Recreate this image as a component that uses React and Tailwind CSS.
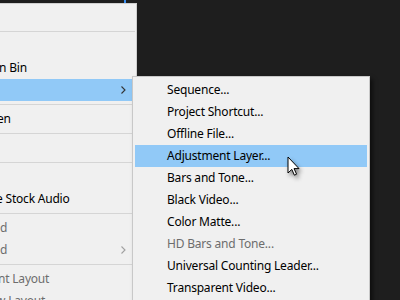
import React from "react";

const leftItems = [
    { text: "" },
    { sep: true },
    { text: "" },
    { text: "n Bin", shift: -1 },
    { text: "", active: true, sub: true },
    { sep: true },
    { text: "en", shift: -3 },
    { sep: true },
    { text: "" },
    { sep: true },
    { text: "" },
    { text: "e Stock Audio", shift: -4 },
    { sep: true },
    { text: "id", shift: -3, disabled: true },
    { text: "id", shift: -3, disabled: true, sub: true },
    { sep: true },
    { text: "nt Layout", shift: -2, disabled: true },
    { text: "w Layout", shift: -4, disabled: true },
];

const subItems = [
    { text: "Sequence..." },
    { text: "Project Shortcut..." },
    { text: "Offline File..." },
    { text: "Adjustment Layer...", active: true },
    { text: "Bars and Tone..." },
    { text: "Black Video..." },
    { text: "Color Matte..." },
    { text: "HD Bars and Tone...", disabled: true },
    { text: "Universal Counting Leader..." },
    { text: "Transparent Video..." },
];

const Chevron = ({ disabled }) => (
    <svg width="5" height="8" viewBox="0 0 5 8" className="shrink-0">
        <path d="M0.5 0.5 L4 4 L0.5 7.5" fill="none" stroke={disabled ? "#a0a0a0" : "#333"} strokeWidth="1.1" />
    </svg>
);

const Cursor = () => (
    <svg width="14" height="21" viewBox="0 0 14 21" className="absolute left-[287px] top-[156px] drop-shadow-[2px_3px_2px_rgba(0,0,0,0.45)]">
        <path d="M1 1 L1 17 L4.8 13.4 L7.4 19.2 L9.6 18.2 L7 12.6 L12 12.6 Z" fill="#fff" stroke="#000" strokeWidth="1" strokeLinejoin="round" />
    </svg>
);

const App = () => {
    return (
        <div className="relative w-[400px] h-[300px] overflow-hidden bg-[#1e1e1e]" style={{ fontFamily: '"Noto Sans", "Open Sans", sans-serif' }}>
            <div className="absolute left-[124px] top-0 w-[2px] h-[3px] bg-[#3b8ff0]" />

            {/* left context menu */}
            <div className="absolute left-0 top-[3px] w-[137px] h-[320px] bg-[#f0f0f0] border-t border-r border-[#cfcfcf] pt-[2px]">
                {leftItems.map((item, i) =>
                    item.sep ? (
                        <div key={i} className="py-[3px]">
                            <div className="h-px bg-[#d5d5d5] mr-[1px]" />
                        </div>
                    ) : (
                        <div
                            key={i}
                            className={`h-[22px] flex items-center justify-between pr-[10px] text-[12px] tracking-[-0.2px] whitespace-nowrap ${item.active ? "bg-[#91c9f7]" : ""} ${item.disabled ? "text-[#6d6d6d]" : "text-black"}`}
                        >
                            <span style={{ marginLeft: item.shift || 0 }}>{item.text}</span>
                            {item.sub && <Chevron disabled={item.disabled} />}
                        </div>
                    )
                )}
            </div>

            {/* new item submenu */}
            <div className="absolute left-[132px] top-[76px] w-[238px] h-[240px] bg-[#f0f0f0] border border-[#c8c8c8] p-[2px] shadow-[3px_3px_4px_rgba(0,0,0,0.5)]">
                {subItems.map((item, i) => (
                    <div
                        key={i}
                        className={`h-[22px] flex items-center pl-[32px] text-[12px] tracking-[-0.2px] whitespace-nowrap ${item.active ? "bg-[#91c9f7]" : ""} ${item.disabled ? "text-[#6d6d6d]" : "text-black"}`}
                    >
                        {item.text}
                    </div>
                ))}
            </div>

            <Cursor />
        </div>
    );
};

export default App;
